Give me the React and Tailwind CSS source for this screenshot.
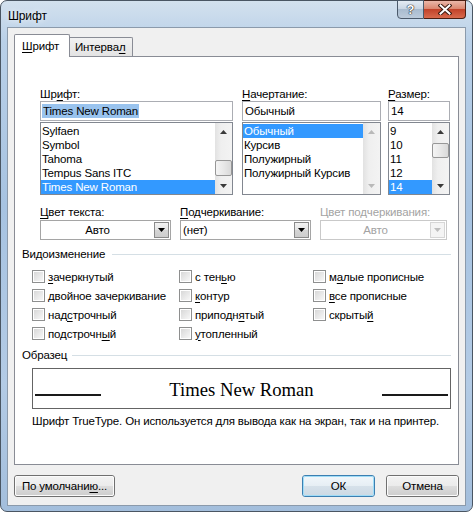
import React from 'react';

const U = ({ children }) => (
  <span className="underline underline-offset-[2px] decoration-1">{children}</span>
);

function Arrow({ dir = 'down', color = '#000' }) {
  return (
    <svg width="7" height="4" viewBox="0 0 7 4">
      {dir === 'down' ? (
        <path d="M0 0H7L3.5 4Z" fill={color} />
      ) : (
        <path d="M0 4H7L3.5 0Z" fill={color} />
      )}
    </svg>
  );
}

function ScrollBar({ thumb, disabled }) {
  const c = disabled ? '#b9b9b9' : '#3a3a3a';
  return (
    <div className="w-[17px] h-full flex flex-col bg-[linear-gradient(90deg,#e2e2e2,#efefef_35%,#f3f3f3)] shrink-0">
      <div className="h-[17px] flex items-center justify-center">
        <Arrow dir="up" color={c} />
      </div>
      <div className="flex-1 relative">
        {thumb && (
          <div
            className={`absolute left-0 right-0 ${thumb} rounded-[2px] border border-[#979797] bg-[linear-gradient(90deg,#f4f4f4,#e8e8e8_50%,#d9d9d9)]`}
          />
        )}
      </div>
      <div className="h-[17px] flex items-center justify-center">
        <Arrow dir="down" color={c} />
      </div>
    </div>
  );
}

function ListBox({ w, items, selected, thumb, disabled }) {
  return (
    <div className={`${w} h-[73px] mt-px border border-[#828790] bg-white flex`}>
      <div className="flex-1 min-w-0 pt-px overflow-hidden">
        {items.map((it) => (
          <div
            key={it}
            className={`h-[14px] leading-[14px] pl-px whitespace-nowrap ${
              it === selected ? 'bg-[#3399ff] text-white' : ''
            }`}
          >
            {it}
          </div>
        ))}
      </div>
      <ScrollBar thumb={thumb} disabled={disabled} />
    </div>
  );
}

function TextBox({ w, children }) {
  return (
    <div className={`${w} h-[20px] border border-[#abadb3] bg-white flex items-center pl-px`}>
      {children}
    </div>
  );
}

function Combo({ w, children, disabled, center }) {
  return (
    <div
      className={`${w} h-[20px] border ${
        disabled ? 'border-[#c9c9c9] text-[#a3a3a3]' : 'border-[#a5a5a5]'
      } bg-white flex items-center`}
    >
      <div className={`flex-1 ${center ? 'text-center' : 'pl-[2px]'}`}>{children}</div>
      <div
        className={`w-[15px] h-[16px] mr-px border ${
          disabled
            ? 'border-[#d6d6d6] bg-[#f4f4f4]'
            : 'border-[#8a8a8a] bg-[linear-gradient(#f3f3f3,#e4e4e4_50%,#d6d6d6_50%,#cdcdcd)]'
        } flex items-center justify-center`}
      >
        <Arrow dir="down" color={disabled ? '#bdbdbd' : '#000'} />
      </div>
    </div>
  );
}

function Check({ children }) {
  return (
    <div className="flex items-center h-[19px]">
      <div className="w-[13px] h-[13px] border border-[#8e8f8f] bg-white p-px shrink-0">
        <div className="w-full h-full bg-[linear-gradient(135deg,#d8d8d8,#f7f7f7)]" />
      </div>
      <span className="ml-[3px] whitespace-nowrap">{children}</span>
    </div>
  );
}

function Btn({ w, children, def }) {
  return (
    <div
      className={`${w} h-[22px] rounded-[3px] border ${
        def ? 'border-[#3c7fb1]' : 'border-[#707070]'
      } bg-white`}
    >
      <div
        className={`h-full rounded-[2px] flex items-center justify-center border ${
          def
            ? 'border-[#9fdcf7] bg-[linear-gradient(#f0f6fa_0%,#e6eef4_50%,#d6e1ea_50%,#cddae4_100%)]'
            : 'border-[#fbfbfb] bg-[linear-gradient(#f2f2f2_0%,#ebebeb_50%,#dddddd_50%,#cfcfcf_100%)]'
        }`}
      >
        {children}
      </div>
    </div>
  );
}

function Group({ title, line }) {
  return (
    <div className="flex items-center h-[14px] ml-[7px] mr-[7px]">
      <span className="whitespace-nowrap">{title}</span>
      <div className={`flex-1 h-px bg-[#d5dfe5] ${line}`} />
    </div>
  );
}

export default function App() {
  return (
    <div className="w-[473px] h-[512px] bg-white font-['Liberation_Sans','Arial',sans-serif] text-[11.5px] tracking-[-0.15px] leading-[14px] text-black select-none">
      <div className="w-full h-full rounded-[7px] border border-[#4a5663] bg-[linear-gradient(180deg,#d3e1ee_0%,#b9d0e8_8%,#a7c3e1_40%,#b3cbe5_75%,#a3bedc_100%)] flex flex-col px-[6px] pb-[5px]">
        {/* Title bar */}
        <div className="h-[26px] flex items-start">
          <div className="pt-[8px] pl-px text-[12px] [text-shadow:0_0_6px_#ffffff]">Шрифт</div>
          <div className="flex-1" />
          <div className="flex -mt-px">
            <div className="w-[27px] h-[19px] rounded-bl-[4px] border border-[#4b5a6b] bg-[linear-gradient(#e3ebf3,#c9d6e4_45%,#a9bccf_50%,#bccbdb)] flex items-center justify-center text-white font-bold text-[13px] [text-shadow:0_0_1px_#222,0_0_1px_#222,0_0_1px_#222]">
              ?
            </div>
            <div className="w-[42px] h-[19px] rounded-br-[4px] border border-l-0 border-[#4b1e12] bg-[linear-gradient(#eab7a9,#db8770_45%,#c2432a_50%,#d86a4d)] flex items-center justify-center">
              <svg width="14" height="11" viewBox="0 0 14 11">
                <path d="M2.5 1.5L11.5 9.5M11.5 1.5L2.5 9.5" stroke="#3a1a10" strokeWidth="4" strokeLinecap="square" />
                <path d="M2.5 1.5L11.5 9.5M11.5 1.5L2.5 9.5" stroke="#ffffff" strokeWidth="2" strokeLinecap="square" />
              </svg>
            </div>
          </div>
        </div>

        {/* Client area */}
        <div className="flex-1 bg-[#f0f0f0] border border-[#8b9aab] flex flex-col px-[6px] pt-[6px]">
          {/* Tabs */}
          <div className="flex items-end h-[22px]">
            <div className="relative z-10 -mb-px h-[23px] w-[56px] bg-white border border-b-0 border-[#898c95] rounded-t-[2px] flex items-center pl-[7px]">
              <span>
                <U>Ш</U>рифт
              </span>
            </div>
            <div className="h-[19px] w-[63px] border border-l-0 border-b-0 border-[#898c95] rounded-tr-[2px] bg-[linear-gradient(#f2f2f2,#e3e3e3)] flex items-center pl-[5px]">
              <span>
                Интерва<U>л</U>
              </span>
            </div>
          </div>

          {/* Tab panel */}
          <div className="h-[409px] bg-white border border-[#898c95] flex flex-col">
            {/* Font / style / size */}
            <div className="flex pl-[25px] pt-[30px]">
              <div className="flex flex-col">
                <div className="h-[14px]">
                  Шр<U>и</U>фт:
                </div>
                <TextBox w="w-[193px]">
                  <span className="bg-[#99c3ee] px-px">Times New Roman</span>
                </TextBox>
                <ListBox
                  w="w-[193px]"
                  items={['Sylfaen', 'Symbol', 'Tahoma', 'Tempus Sans ITC', 'Times New Roman']}
                  selected="Times New Roman"
                  thumb="top-[20px] h-[16px]"
                />
              </div>
              <div className="flex flex-col ml-[9px]">
                <div className="h-[14px]">
                  <U>Н</U>ачертание:
                </div>
                <TextBox w="w-[139px]">
                  <span className="px-px">Обычный</span>
                </TextBox>
                <ListBox
                  w="w-[139px]"
                  items={['Обычный', 'Курсив', 'Полужирный', 'Полужирный Курсив']}
                  selected="Обычный"
                  disabled
                />
              </div>
              <div className="flex flex-col ml-[7px]">
                <div className="h-[14px]">
                  <U>Р</U>азмер:
                </div>
                <TextBox w="w-[62px]">
                  <span className="px-px">14</span>
                </TextBox>
                <ListBox
                  w="w-[62px]"
                  items={['9', '10', '11', '12', '14']}
                  selected="14"
                  thumb="top-[3px] h-[15px]"
                />
              </div>
            </div>

            {/* Colour / underline */}
            <div className="flex pl-[25px] mt-[10px]">
              <div className="flex flex-col">
                <div className="h-[15px]">
                  <U>Ц</U>вет текста:
                </div>
                <Combo w="w-[131px]" center>
                  Авто
                </Combo>
              </div>
              <div className="flex flex-col ml-[9px]">
                <div className="h-[15px]">
                  <U>П</U>одчеркивание:
                </div>
                <Combo w="w-[131px]">(нет)</Combo>
              </div>
              <div className="flex flex-col ml-[9px]">
                <div className="h-[15px] text-[#a3a3a3]">Цвет подчеркивания:</div>
                <Combo w="w-[127px]" center disabled>
                  Авто
                </Combo>
              </div>
            </div>

            {/* Effects */}
            <div className="mt-[7px]">
              <Group title="Видоизменение" line="ml-[7px]" />
            </div>
            <div className="flex pl-[17px] mt-[6px]">
              <div className="w-[147px] flex flex-col">
                <Check>
                  <U>з</U>ачеркнутый
                </Check>
                <Check>
                  <U>д</U>войное зачеркивание
                </Check>
                <Check>
                  над<U>с</U>трочный
                </Check>
                <Check>
                  подстрочн<U>ы</U>й
                </Check>
              </div>
              <div className="w-[134px] flex flex-col">
                <Check>
                  с тен<U>ь</U>ю
                </Check>
                <Check>
                  <U>к</U>онтур
                </Check>
                <Check>
                  приподн<U>я</U>тый
                </Check>
                <Check>
                  <U>у</U>топленный
                </Check>
              </div>
              <div className="flex flex-col">
                <Check>
                  м<U>а</U>лые прописные
                </Check>
                <Check>
                  <U>в</U>се прописные
                </Check>
                <Check>
                  скрыты<U>й</U>
                </Check>
              </div>
            </div>

            {/* Sample */}
            <div className="mt-[5px]">
              <Group title="Образец" line="ml-[5px]" />
            </div>
            <div className="ml-[17px] mt-[6px] w-[419px] h-[41px] border border-[#646464] flex items-end px-[2px] pb-[9px]">
              <div className="w-[66px] h-[2px] bg-[#1a1a1a] mb-[3px]" />
              <div className="flex-1 text-center font-['Liberation_Serif','Times_New_Roman',serif] text-[18.67px] tracking-normal leading-[19px]">
                Times New Roman
              </div>
              <div className="w-[66px] h-[2px] bg-[#1a1a1a] mb-[3px]" />
            </div>
            <div className="ml-[17px] mt-[5px] whitespace-nowrap">
              Шрифт TrueType. Он используется для вывода как на экран, так и на принтер.
            </div>
          </div>

          {/* Buttons */}
          <div className="flex mt-[10px]">
            <Btn w="w-[101px]">
              <span>
                По умолчани<U>ю</U>...
              </span>
            </Btn>
            <div className="flex-1" />
            <Btn w="w-[73px]" def>
              ОК
            </Btn>
            <div className="w-[11px]" />
            <Btn w="w-[73px]">Отмена</Btn>
          </div>
        </div>
      </div>
    </div>
  );
}
